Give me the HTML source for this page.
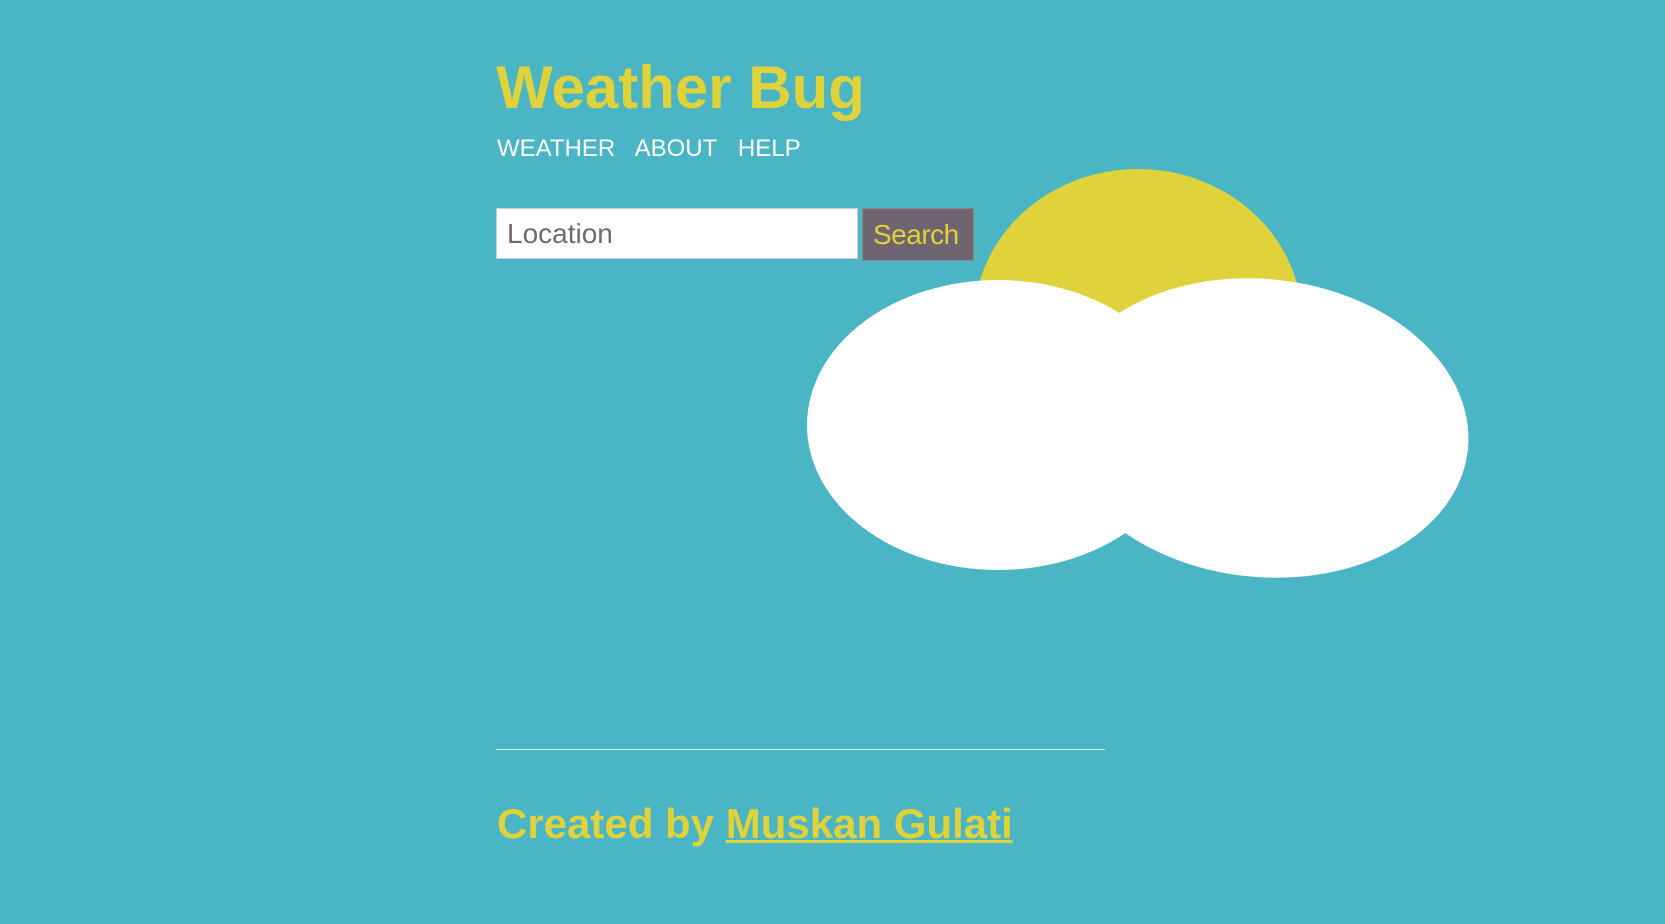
<!DOCTYPE html>
<html><head><style>
html,body{margin:0;padding:0;width:1665px;height:924px;overflow:hidden;background:#49b5c5;font-family:"Liberation Sans",Arial,sans-serif;}
.t{position:absolute;left:496px;top:48px;font-size:60px;font-weight:bold;color:#e0d23a;line-height:80px;margin:0;}
.nav{position:absolute;left:497px;top:135px;font-size:24px;color:#fff;white-space:nowrap;}
.nav span{margin-right:14px;}
.inp{position:absolute;left:496px;top:208px;width:362px;height:51px;background:#fff;border:1px solid #ccc;box-sizing:border-box;font-size:28px;color:#6c6c6c;padding-left:10px;line-height:49px;}
.btn{position:absolute;left:862px;top:208px;width:112px;height:53px;background:#6e6570;border:1px solid #888;box-sizing:border-box;font-size:28px;color:#e0d23a;line-height:51px;padding-left:10px;letter-spacing:-0.5px;}
hr{position:absolute;left:496px;top:749px;width:609px;margin:0;border:0;border-top:1px solid #d8eef2;}
.f{position:absolute;left:497px;top:800px;font-size:42px;font-weight:bold;color:#e0d23a;white-space:nowrap;}
.f u{text-decoration-thickness:3px;}
svg{position:absolute;left:0;top:0;}
</style></head><body>
<svg width="1665" height="924">
<ellipse cx="1138" cy="321" rx="164" ry="152" fill="#e0d23a"/>
<ellipse cx="998" cy="425" rx="191" ry="145" fill="#fff"/>
<ellipse cx="1262" cy="428" rx="207" ry="149" fill="#fff" transform="rotate(6 1262 428)"/>
</svg>
<h1 class="t">Weather Bug</h1>
<div class="nav"><span>WEATHER</span> <span>ABOUT</span> <span>HELP</span></div>
<div class="inp">Location</div>
<div class="btn">Search</div>
<hr>
<div class="f">Created by <u>Muskan Gulati</u></div>
</body></html>
